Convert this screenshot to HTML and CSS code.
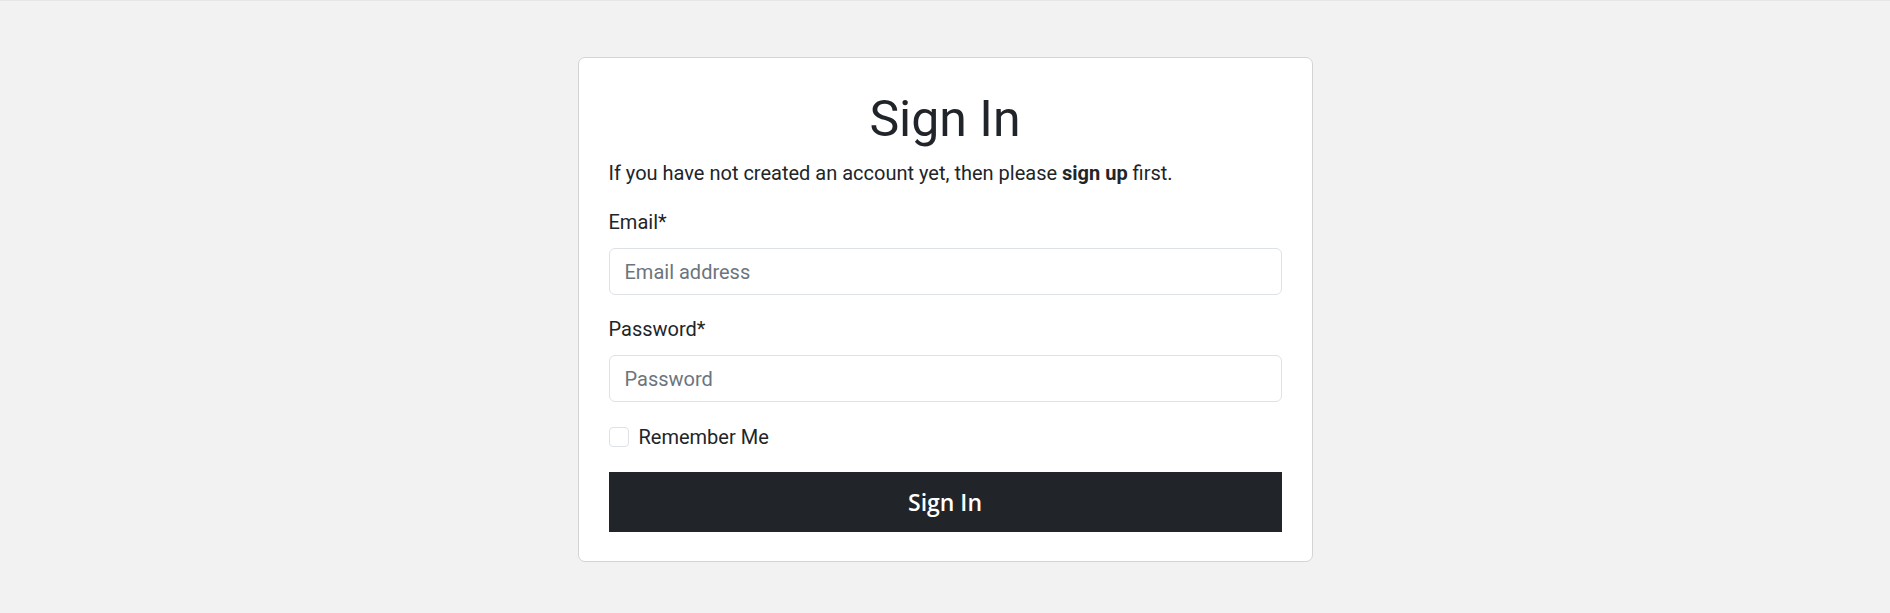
FILE: index.html
```html
<!DOCTYPE html>
<html lang="en">
<head>
<meta charset="utf-8">
<title>Sign In</title>
<link rel="stylesheet" href="styles.css">
</head>
<body>
<main class="page">
  <form class="card">
    <h1 class="title">Sign In</h1>
    <p class="intro">If you have not created an account yet, then please <a href="#" class="link">sign up</a> first.</p>
    <div class="field">
      <label class="label" for="email">Email*</label>
      <input class="input" id="email" type="email" placeholder="Email address">
    </div>
    <div class="field">
      <label class="label" for="password">Password*</label>
      <input class="input" id="password" type="password" placeholder="Password">
    </div>
    <label class="check">
      <span class="box"></span>
      <span class="check-text">Remember Me</span>
    </label>
    <button class="btn" type="button">Sign In</button>
  </form>
</main>
</body>
</html>
```

FILE: styles.css
```css
* { box-sizing: border-box; }
html, body { margin: 0; padding: 0; }
body {
  background: #f2f2f2;
  font-family: Roboto, "Liberation Sans", sans-serif;
  color: #212529;
  border-top: 1px solid #e6e6e6;
  min-height: 613px;
}
.page {
  display: flex;
  justify-content: center;
  padding-top: 56px;
}
.card {
  width: 735px;
  background: #fff;
  border: 1px solid #d4d4d4;
  border-radius: 7px;
  padding: 31px 30px 29px;
  display: flex;
  flex-direction: column;
}
.title {
  margin: 0;
  text-align: center;
  font-size: 50px;
  font-weight: 400;
  line-height: 60px;
}
.intro {
  margin: 9px 0 0;
  font-size: 20px;
  line-height: 30px;
}
.link {
  color: #212529;
  font-weight: 700;
  text-decoration: none;
}
.field {
  display: flex;
  flex-direction: column;
  margin-top: 19px;
}
.field + .field { margin-top: 19px; }
.label {
  font-size: 20px;
  line-height: 30px;
  margin-bottom: 11px;
}
.input {
  height: 47px;
  border: 1px solid #dee2e6;
  border-radius: 6px;
  padding: 0 15px;
  font-family: Roboto, "Liberation Sans", sans-serif;
  font-size: 20px;
  color: #212529;
  outline: none;
}
.input::placeholder { color: #6c757d; opacity: 1; }
.check {
  display: flex;
  align-items: center;
  gap: 10px;
  margin-top: 25px;
  height: 20px;
}
.box {
  width: 20px;
  height: 20px;
  border: 1px solid #dee2e6;
  border-radius: 4px;
  background: #fff;
}
.check-text {
  font-size: 20px;
  line-height: 20px;
}
.btn {
  margin-top: 25px;
  height: 60px;
  border: 0;
  border-radius: 0;
  background: #212529;
  color: #fff;
  font-family: "Open Sans", "Noto Sans", sans-serif;
  font-size: 23px;
  font-weight: 600;
  cursor: pointer;
}
```
